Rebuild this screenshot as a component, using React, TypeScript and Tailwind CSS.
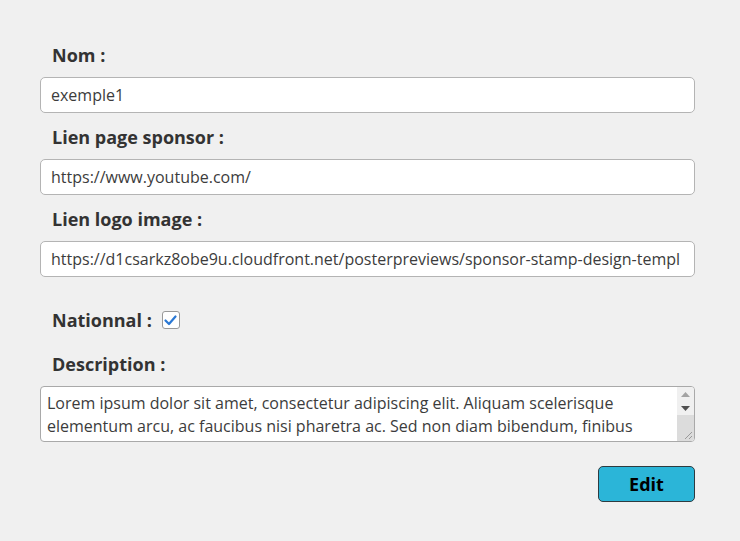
import React from "react";

const font = { fontFamily: '"Open Sans", "Noto Sans", sans-serif' };

function Field({ label, value }: { label: string; value: string }) {
  return (
    <div className="flex flex-col">
      <div className="pl-[12px] h-[24px] flex items-center text-[18px] font-bold text-[#333]">{label}</div>
      <div className="mt-[10px] h-[36px] bg-white border border-[#b4b4b4] rounded-[5px] flex items-center px-[10px] overflow-hidden">
        <span className="whitespace-nowrap text-[16px] text-[#3c3c3c]">{value}</span>
      </div>
    </div>
  );
}

export default function App() {
  return (
    <div className="w-[740px] h-[541px] bg-[#f0f0f0] text-[#333]" style={font}>
      <div className="pl-[40px] pr-[45px] pt-[43px] flex flex-col">
        <Field label="Nom :" value="exemple1" />
        <div className="h-[12px]" />
        <Field label="Lien page sponsor :" value="https://www.youtube.com/" />
        <div className="h-[12px]" />
        <Field label="Lien logo image :" value="https://d1csarkz8obe9u.cloudfront.net/posterpreviews/sponsor-stamp-design-templ" />
        <div className="mt-[31px] pl-[12px] h-[24px] flex items-center gap-[10px]">
          <span className="text-[18px] font-bold">Nationnal :</span>
          <div className="w-[18px] h-[18px] border border-[#999] rounded-[3px] bg-white flex items-center justify-center">
            <svg width="13" height="11" viewBox="0 0 13 11">
              <path d="M1.5 5.5 L5 9 L11.5 1.5" fill="none" stroke="#2a78d4" strokeWidth="2.2" strokeLinecap="round" strokeLinejoin="round" />
            </svg>
          </div>
        </div>
        <div className="mt-[20px] pl-[12px] h-[24px] flex items-center text-[18px] font-bold">Description :</div>
        <div className="mt-[10px] h-[56px] bg-white border border-[#a9a9a9] rounded-[4px] flex overflow-hidden">
          <div className="flex-1 pl-[6px] pt-[5px] text-[16px] leading-[23px] text-[#3c3c3c] overflow-hidden">
            Lorem ipsum dolor sit amet, consectetur adipiscing elit. Aliquam scelerisque elementum arcu, ac faucibus nisi pharetra ac. Sed non diam bibendum, finibus
          </div>
          <div className="w-[17px] bg-[#f0f0f0] flex flex-col">
            <div className="h-[14px] flex items-center justify-center">
              <svg width="9" height="5" viewBox="0 0 9 5"><path d="M0 5 L4.5 0 L9 5 Z" fill="#a3a3a3" /></svg>
            </div>
            <div className="h-[14px] flex items-center justify-center">
              <svg width="9" height="5" viewBox="0 0 9 5"><path d="M0 0 L4.5 5 L9 0 Z" fill="#505050" /></svg>
            </div>
            <div className="flex-1 bg-[#dcdcdc] flex items-end justify-end pr-[1px] pb-[1px]">
              <svg width="10" height="10" viewBox="0 0 10 10">
                <path d="M9 2 L2 9 M9 6 L6 9" stroke="#9a9a9a" strokeWidth="1" />
              </svg>
            </div>
          </div>
        </div>
        <div className="mt-[24px] flex justify-end">
          <div className="w-[97px] h-[36px] bg-[#2bb5d8] border border-[#2e3b40] rounded-[5px] flex items-center justify-center text-[18px] font-bold text-black">
            Edit
          </div>
        </div>
      </div>
    </div>
  );
}
